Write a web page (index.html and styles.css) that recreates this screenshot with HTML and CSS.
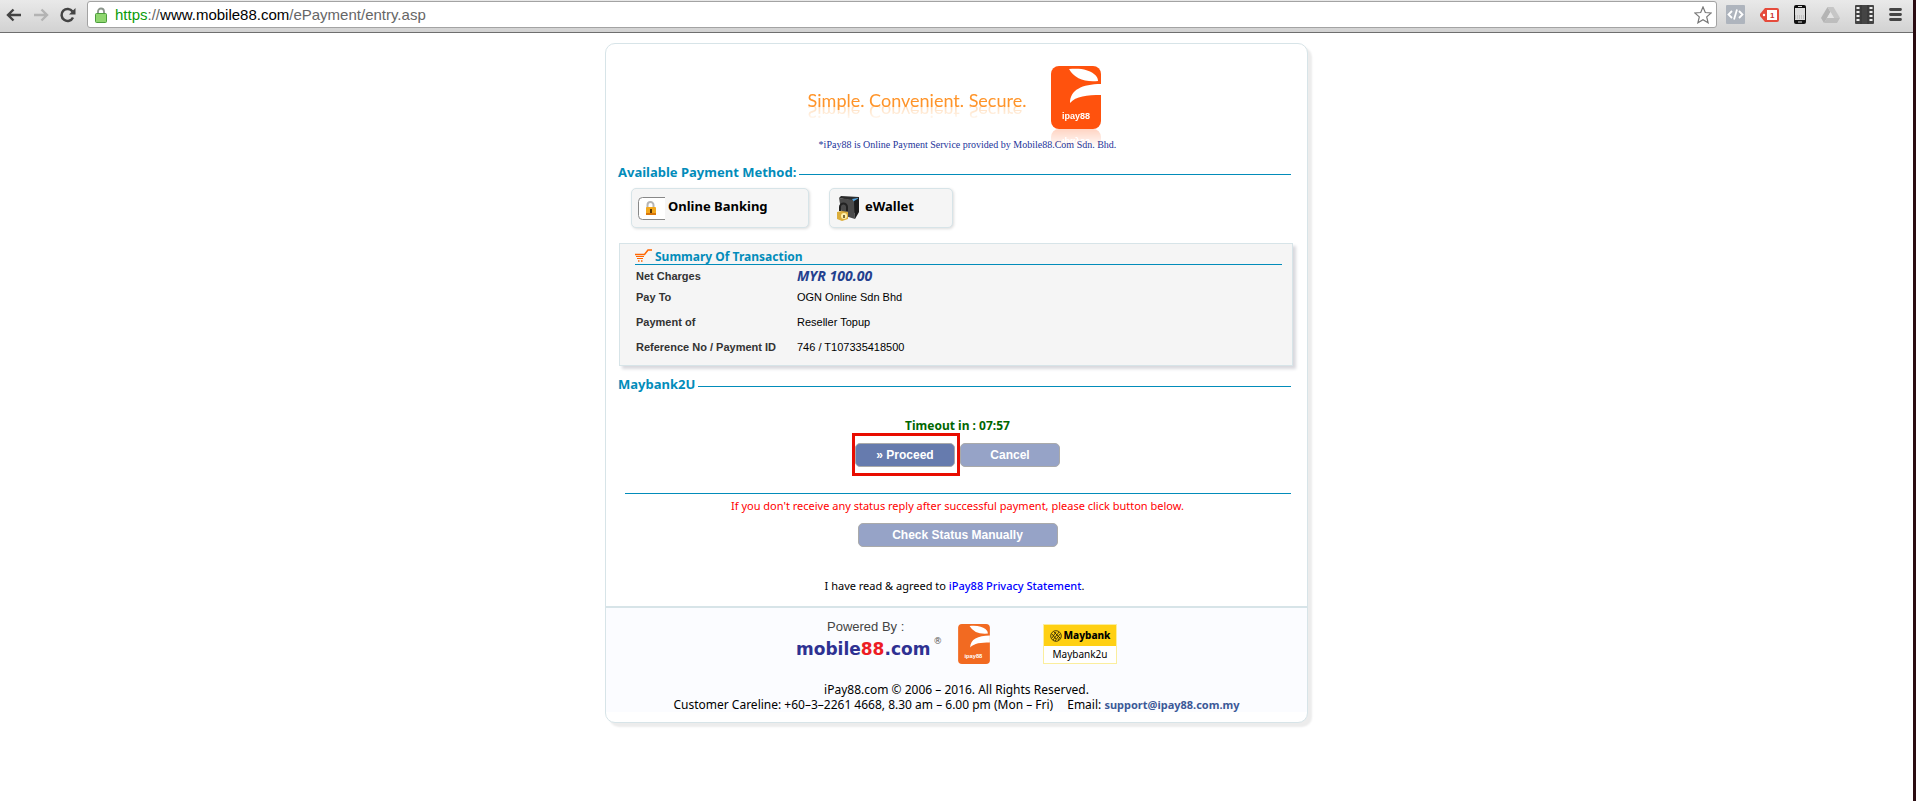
FILE: index.html
```html
<!DOCTYPE html>
<html lang="en">
<head>
<meta charset="utf-8">
<title>iPay88 Payment</title>
<link rel="stylesheet" href="styles.css">
</head>
<body>
<header class="toolbar">
  <button class="tool" aria-label="Back"><svg width="16" height="14" viewBox="0 0 16 14"><path d="M15 7H2M7.500 1.500L2 7l5.500 5.500" fill="none" stroke="#444" stroke-width="2.400"/></svg></button>
  <button class="tool" aria-label="Forward"><svg width="16" height="14" viewBox="0 0 16 14"><path d="M1 7H14M8.500 1.500L14 7l-5.500 5.500" fill="none" stroke="#b3b3b3" stroke-width="2.400"/></svg></button>
  <button class="tool" aria-label="Reload"><svg width="16" height="16" viewBox="0 0 16 16"><path d="M13 10.500A6 6 0 1 1 12.500 4.500" fill="none" stroke="#444" stroke-width="2.500"/><path d="M15.500 1v6.500H9z" fill="#444"/></svg></button>
  <div class="address">
    <svg width="12" height="16" viewBox="0 0 12 16"><path d="M3 8V4.500a3 3 0 0 1 6 0V8" fill="none" stroke="#8b958b" stroke-width="1.800"/><rect x=".5" y="6.500" width="11" height="9" rx="1" fill="#8fd66f" stroke="#4b9d3c"/></svg>
    <span class="url"><span class="scheme">https</span>://<span class="host">www.mobile88.com</span>/ePayment/entry.asp</span>
    <button class="tool" aria-label="Bookmark"><svg width="18" height="18" viewBox="0 0 18 18"><path d="M9 1l2.300 5.500 5.900.5-4.500 3.900 1.400 5.900L9 13.700l-5.100 3.100 1.400-5.900L.8 7l5.900-.5z" fill="#fff" stroke="#777" stroke-width="1.200"/></svg></button>
  </div>
  <div class="extensions">
    <button class="tool" aria-label="Code"><svg width="19" height="19" viewBox="0 0 19 19"><rect width="19" height="19" rx="1" fill="#aeb4bd"/><path d="M6 6L2.500 9.500 6 13M13 6l3.500 3.500L13 13M11 4.500L8 14.500" fill="none" stroke="#fff" stroke-width="1.800"/></svg></button>
    <button class="tool" aria-label="Tag, 1"><svg width="19" height="14" viewBox="0 0 19 14"><path d="M5 0H17a2 2 0 0 1 2 2V12a2 2 0 0 1-2 2H5L0 8V6z" fill="#e54b3c"/><rect x="7" y="2" width="10" height="10" fill="#fff"/><circle cx="4" cy="7" r="1.200" fill="#fff"/><text x="10" y="10" class="tag-text">1</text></svg></button>
    <button class="tool" aria-label="Phone"><svg width="12" height="19" viewBox="0 0 12 19"><rect width="12" height="19" rx="2" fill="#111"/><rect x="1" y="3" width="10" height="12" fill="#ddd"/><path d="M1 11h10M1 13h10" stroke="#aaa" stroke-dasharray="1 1"/><path d="M4 17h4M4 1.500h4" stroke="#ddd"/></svg></button>
    <button class="tool" aria-label="Drive"><svg width="19" height="16" viewBox="0 0 19 16"><path d="M6.500 0L0 11l3 5L9.500 5z" fill="#b4b4b4"/><path d="M6.500 0h6L19 11h-6z" fill="#c6c6c6"/><path d="M3 16l3-5h13l-3 5z" fill="#bdbdbd"/><path d="M9.500 5l3.500 6H6z" fill="#e4e4e4"/></svg></button>
    <button class="tool" aria-label="Film"><svg width="19" height="19" viewBox="0 0 19 19"><rect width="19" height="19" rx="1" fill="#444"/><path d="M3 2v16M16 2v16" stroke="#eee" stroke-width="3" stroke-dasharray="2 2"/><path d="M6 0v19M13 0v19" stroke="#333"/></svg></button>
    <button class="tool" aria-label="Menu"><svg width="13" height="13" viewBox="0 0 13 13"><path d="M1.500 1.500h10M1.500 6.500h10M1.500 11.500h10" stroke="#444" stroke-width="2.800" stroke-linecap="round"/></svg></button>
  </div>
</header>

<main class="card">
  <div class="content">
    <div class="brand">
      <div class="slogan">Simple. Convenient. Secure.</div>
      <div class="logo">
        <svg width="50" height="63" viewBox="0 0 50 63"><rect width="50" height="63" rx="8" fill="currentColor"/><path d="M18 3C31 2 38 4 43 8Q47 11 47 15Q26 17 18 3Z" fill="#fff"/><path d="M50 18C31 18 19 24 19 37C25 30 36 29 50 29Z" fill="#fff"/><text x="11" y="53" class="ipay-text">ipay88</text></svg>
      </div>
    </div>
    <p class="note">*iPay88 is Online Payment Service provided by Mobile88.Com Sdn. Bhd.</p>

    <h2 class="section">Available Payment Method:</h2>
    <div class="methods">
      <button class="method banking">
        <svg width="27" height="23" viewBox="0 0 27 23"><path d="M27 .5H4.500a4 4 0 0 0-4 4v14a4 4 0 0 0 4 4H27" fill="#fff" stroke="#888"/><path d="M9.500 12V8a3 3 0 0 1 6 0v4" fill="none" stroke="#b5b5b5" stroke-width="2"/><rect x="8" y="10" width="10" height="8" rx="1" fill="#f3a81d"/><path d="M8 17h10" stroke="#d9770b" stroke-width="2"/><path d="M13 12v4" stroke="#5b3a05" stroke-width="2"/></svg>
        <span>Online Banking</span>
      </button>
      <button class="method wallet">
        <svg width="24" height="25" viewBox="0 0 24 25"><path d="M3 2l2-2 18 1v15l-5 1V5z" fill="#2b2b2b"/><path d="M3 2l15 2 1 19-13-4z" fill="#4b4b4b"/><path d="M16 3l6-1v3l-3 2z" fill="#58a9e6"/><path d="M18 5l5-3v14l-4 7z" fill="#1c1c1c"/><path d="M4 15v-4a3.500 3.500 0 0 1 7 0v4" fill="none" stroke="#222" stroke-width="2"/><path d="M1 16l5-1 6 1v7l-6 2-5-2z" fill="#dcae3c"/><circle cx="8" cy="20" r="3" fill="#fff1ac"/><path d="M8 19v3" stroke="#554010" stroke-width="1.500"/></svg>
        <span>eWallet</span>
      </button>
    </div>

    <section class="summary">
      <h3 class="summary-title">
        <svg width="17" height="13" viewBox="0 0 17 13"><path d="M0 5.500h9.500L13 1h4" fill="none" stroke="#f60" stroke-width="1.500"/><path d="M1 7.500h8M2 9.500h6" stroke="#f60"/><path d="M3 12h1.500M6 12h1.500" stroke="#f60" stroke-width="1.500"/></svg>
        Summary Of Transaction
      </h3>
      <table class="details">
        <tr class="amount"><th>Net Charges</th><td>MYR 100.00</td></tr>
        <tr class="payee"><th>Pay To</th><td>OGN Online Sdn Bhd</td></tr>
        <tr><th>Payment of</th><td>Reseller Topup</td></tr>
        <tr><th>Reference No / Payment ID</th><td>746 / T107335418500</td></tr>
      </table>
    </section>

    <h2 class="section">Maybank2U</h2>
    <p class="timeout">Timeout in : 07:57</p>
    <div class="actions">
      <span class="highlight"><button class="action primary">» Proceed</button></span>
      <button class="action">Cancel</button>
    </div>

    <p class="warning">If you don't receive any status reply after successful payment, please click button below.</p>
    <button class="action check">Check Status Manually</button>
    <p class="privacy">I have read &amp; agreed to <a href="#">iPay88 Privacy Statement</a>.</p>
  </div>

  <footer class="footer">
    <div class="partners">
      <div class="powered">
        <span class="by">Powered By :</span>
        <span class="mobile88"><b>mobile<em>88</em>.com</b><sup>®</sup></span>
      </div>
      <svg class="small-logo" width="32" height="40" viewBox="0 0 50 63"><rect width="50" height="63" rx="6" fill="currentColor"/><path d="M18 3C31 2 38 4 43 8Q47 11 47 15Q26 17 18 3Z" fill="#fff"/><path d="M50 18C31 18 19 24 19 37C25 30 36 29 50 29Z" fill="#fff"/><text x="10" y="53" class="ipay-text">ipay88</text></svg>
      <div class="maybank">
        <div class="maybank-top">
          <svg width="12" height="12" viewBox="0 0 12 12"><g fill="none" stroke="#221c05" stroke-width=".8"><circle cx="6" cy="6" r="5.300"/><path d="M2 8l4-6M3 10l6-8M5 11l5-7M8 10l2-3M2 4l4 5M4 2l6 6"/></g></svg>
          Maybank
        </div>
        <div class="maybank-bottom">Maybank2u</div>
      </div>
    </div>
    <p class="legal">iPay88.com © 2006 – 2016. All Rights Reserved.</p>
    <p class="legal contact"><span>Customer Careline: +60–3–2261 4668, 8.30 am – 6.00 pm (Mon – Fri)</span><span>Email: <a href="#">support@ipay88.com.my</a></span></p>
  </footer>
</main>
</body>
</html>
```
FILE: styles.css
```css
* { box-sizing: border-box; }
body {
  margin: 0;
  min-height: 100vh;
  border-right: 3px solid #2a0c12;
  background: #fff;
  color: #000;
  font: 11px/15px "Noto Sans", "Open Sans", sans-serif;
}
p, h2, h3 { margin: 0; }
button { font: inherit; cursor: pointer; }
a { text-decoration: none; }

.toolbar {
  display: flex;
  align-items: center;
  gap: 11px;
  height: 33px;
  padding: 0 11px 3px 6px;
  background: linear-gradient(#e9e9e9, #d2d2d2);
  border-bottom: 1px solid #6e6e6e;
}
.tool { display: flex; padding: 0; border: 0; background: none; }
.address {
  flex: 1;
  display: flex;
  align-items: center;
  gap: 8px;
  height: 27px;
  padding: 0 4px 0 7px;
  background: #fff;
  border: 1px solid #a3a3a3;
  border-radius: 3px;
}
.url { flex: 1; color: #666; font: 15px/20px "Liberation Sans", Arial, sans-serif; }
.scheme { color: #0a9b0a; }
.host { color: #000; }
.extensions { display: flex; align-items: center; gap: 15px; margin-left: -2px; }
.tag-text { font: bold 8px "Liberation Sans", sans-serif; fill: #c33; }

.card {
  max-width: 703px;
  margin: 10px auto 0;
  padding-bottom: 10px;
  background: #fff;
  border: 1px solid #d7e4e8;
  border-radius: 10px;
  box-shadow: 4px 4px 2px #ececec;
}
.content {
  display: flex;
  flex-direction: column;
  padding: 22px 16px 13px 12px;
}

.brand { display: flex; justify-content: center; gap: 25px; }
.slogan {
  padding-top: 20px;
  color: #ff9429;
  font: 18px/28px Lato, sans-serif;
  height: 48px;
  -webkit-box-reflect: below -16px linear-gradient(transparent 50%, rgba(0, 0, 0, .5));
}
.logo {
  display: flex;
  color: #ff520d;
  height: 63px;
  -webkit-box-reflect: below 0 linear-gradient(transparent 70%, rgba(0, 0, 0, .25));
}
.ipay-text { font: bold 9px "Liberation Sans", sans-serif; fill: #fff; }
.note {
  margin-top: 8px;
  padding-left: 26px;
  color: #23349a;
  text-align: center;
  font: 10px/15px "Liberation Serif", serif;
}

.section {
  display: flex;
  align-items: center;
  gap: 3px;
  margin-top: 10px;
  color: #028cba;
  font-size: 13px;
  line-height: 20px;
}
.section::after { content: ""; flex: 1; height: 1px; margin-top: 4px; background: #028cba; }

.methods { display: flex; gap: 20px; padding: 6px 0 0 13px; }
.method {
  display: flex;
  align-items: center;
  gap: 3px;
  height: 40px;
  padding: 0 6px;
  background: #f5f5f5;
  border: 1px solid #d7e4e8;
  border-radius: 5px;
  box-shadow: 1px 1px 3px #ddd;
  font-size: 13px;
  font-weight: bold;
}
.method span { padding-bottom: 4px; }
.banking { width: 178px; }
.wallet { width: 124px; gap: 5px; }

.summary {
  margin: 15px -2px 0 1px;
  padding: 5px 10px 5px 15px;
  background: #f5f5f5;
  border: 1px solid #d7e4e8;
  box-shadow: 3px 3px 3px #d9d9de;
}
.summary-title {
  display: flex;
  align-items: center;
  gap: 3px;
  border-bottom: 1px solid #028cba;
  color: #028cba;
  font-size: 12px;
  line-height: 15px;
}
.summary-title svg { margin-bottom: 2px; }
.details { border-collapse: collapse; font: 11px/15px "Liberation Sans", Arial, sans-serif; }
.details th { width: 162px; padding: 0 0 0 1px; text-align: left; color: #333; }
.details td { padding: 0; }
.details tr { height: 25px; }
.details .amount { height: 22px; }
.details .payee { height: 23px; }
.details .payee > * { padding-bottom: 3px; }
.details .amount td { color: #24408e; font: italic bold 14px/20px "Noto Sans", sans-serif; }

.summary + .section { margin-top: 8px; }
.timeout {
  margin-top: 24px;
  padding-left: 6px;
  color: #060;
  font-size: 12px;
  font-weight: bold;
  text-align: center;
  line-height: 16px;
}
.actions {
  display: flex;
  justify-content: center;
  padding: 0 4px 17px 0;
  margin: -1px 0 0 7px;
  border-bottom: 1px solid #028cba;
}
.actions > .action { margin-top: 10px; }
.highlight { padding: 7px 2px 6px 0; border: 3px solid #e80c00; }
.action {
  width: 100px;
  height: 24px;
  padding: 0;
  color: #fff;
  background: #96a3c7;
  border: 1px solid #aaa;
  border-radius: 5px;
  font: bold 12px/20px "Liberation Sans", Arial, sans-serif;
}
.primary { background: #667bae; }
.warning { margin-top: 4px; padding-left: 6px; color: #f00; text-align: center; }
.check { align-self: center; width: 200px; margin: 10px 0 0 6px; }
.privacy { margin-top: 31px; text-align: center; }
.privacy a { color: #00f; font-weight: 500; }

.footer { background: #fbfcff; border-top: 2px solid #d7e4e8; }
.partners { display: flex; justify-content: center; align-items: flex-start; padding: 9px 0 18px; }
.powered { display: flex; flex-direction: column; width: 162px; padding-top: 1px; }
.by { padding-left: 31px; color: #444; font: 13px/18px "Liberation Sans", Arial, sans-serif; }
.mobile88 { display: flex; color: #2e3192; font: 17px/26px "DejaVu Sans", sans-serif; }
.mobile88 em { color: #ed1c24; font-style: normal; }
.mobile88 sup { margin-left: 3px; font-size: 9px; line-height: 10px; color: #555; }
.small-logo { margin-top: 7px; color: #f26a21; }
.maybank { width: 74px; margin: 7px 0 0 53px; border: 1px solid #fbee9d; background: #fff; text-align: center; font-size: 10px; }
.maybank-top {
  display: flex;
  align-items: center;
  justify-content: center;
  gap: 2px;
  height: 21px;
  background: #ffd013;
  font-size: 10px;
  font-weight: 800;
}
.maybank-bottom { line-height: 17px; }
.legal { font-size: 12px; text-align: center; }
.contact { display: flex; justify-content: center; gap: 14px; }
.contact a { color: #3b5998; font-size: 11px; font-weight: bold; }
```
